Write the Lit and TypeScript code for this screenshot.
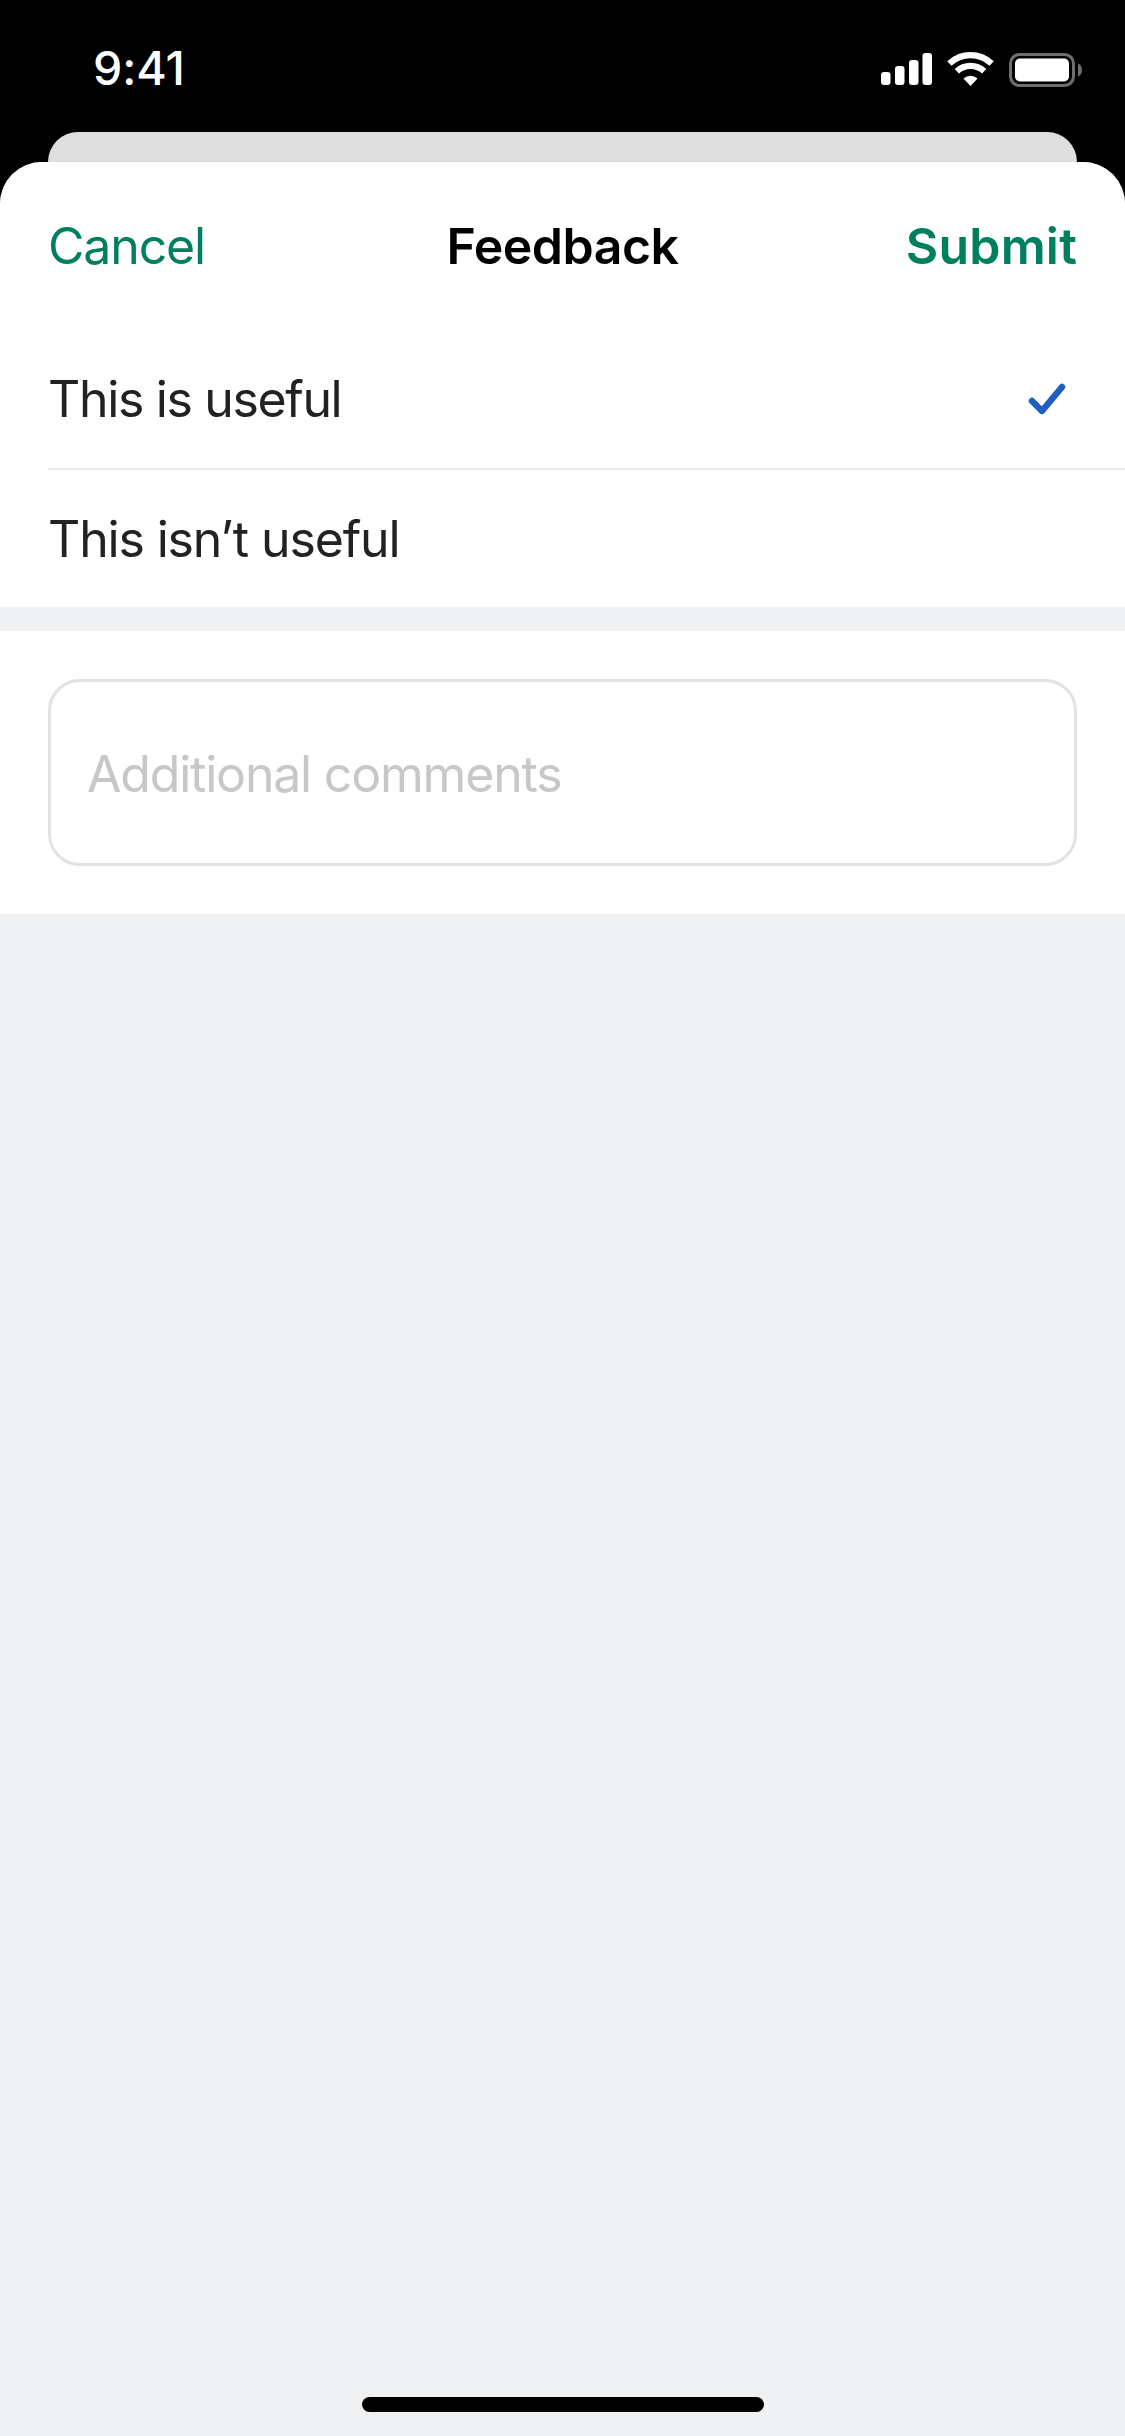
import { LitElement, html, css } from "lit";
import { customElement } from "lit/decorators.js";

@customElement("app-root")
export class AppRoot extends LitElement {
  static styles = css`
    :host {
      display: flex;
      flex-direction: column;
      width: 1125px;
      height: 2436px;
      background: #000;
      font-family: Inter, "Liberation Sans", sans-serif;
      overflow: hidden;
    }
    .status {
      height: 132px;
      box-sizing: border-box;
      padding: 44px 43px 0 93px;
      display: flex;
      justify-content: space-between;
      align-items: flex-start;
      flex: none;
    }
    .time {
      color: #fff;
      font-size: 46.5px;
      font-weight: 500;
      line-height: 48px;
      letter-spacing: -0.1px;
    }
    .icons {
      display: flex;
      align-items: flex-start;
      margin-top: 9px;
    }
    .signal { width: 51px; height: 32px; margin-right: 15px; }
    .wifi { width: 47px; height: 34px; margin-right: 15px; margin-top: -1px; }
    .battery { width: 73px; height: 34px; }
    .peek {
      height: 30px;
      flex: none;
      margin: 0 48px;
      background: #dedede;
      border-radius: 30px 30px 0 0;
    }
    .sheet {
      flex: 1;
      display: flex;
      flex-direction: column;
      background: #f0f1f3;
      border-radius: 42px 42px 0 0;
      overflow: hidden;
    }
    .nav {
      height: 168px;
      flex: none;
      background: #fff;
      box-sizing: border-box;
      padding: 0 48px;
      display: grid;
      grid-template-columns: 1fr auto 1fr;
      align-items: center;
      font-size: 50px;
      line-height: 60px;
    }
    .cancel { color: #007f5f; letter-spacing: -1.15px; }
    .title { color: #000; font-weight: 600; letter-spacing: -0.5px; }
    .submit { color: #007f5f; font-weight: 600; text-align: right; letter-spacing: 0.2px; }
    .list { background: #fff; flex: none; padding-left: 48px; }
    .row {
      height: 138px;
      display: flex;
      align-items: center;
      justify-content: space-between;
      font-size: 50px;
      color: #222;
      letter-spacing: -1.35px;
    }
    .row.first { border-bottom: 2px solid #e8e8ea; }
    .row.last { height: 137px; letter-spacing: -1.15px; }
    .check { width: 40px; height: 34px; margin-right: 58px; }
    .comments {
      margin-top: 24px;
      flex: none;
      background: #fff;
      box-sizing: border-box;
      height: 283px;
      padding: 48px;
    }
    .input {
      height: 187px;
      box-sizing: border-box;
      border: 3px solid #e0e2e5;
      border-radius: 32px;
      display: flex;
      align-items: center;
      padding: 2px 0 0 36px;
      font-size: 50px;
      color: #c7c7c7;
      letter-spacing: -1.2px;
    }
    .spacer {
      flex: 1;
      display: flex;
      align-items: flex-end;
      justify-content: center;
      padding-bottom: 24px;
    }
    .home {
      width: 402px;
      height: 15px;
      border-radius: 8px;
      background: #000;
    }
  `;

  render() {
    return html`
      <div class="status">
        <span class="time">9:41</span>
        <div class="icons">
          <svg class="signal" viewBox="0 0 51 32">
            <rect x="0" y="19" width="9.5" height="13" rx="3" fill="#fff"></rect>
            <rect x="14" y="13" width="9.5" height="19" rx="3" fill="#fff"></rect>
            <rect x="28" y="7" width="9.5" height="25" rx="3" fill="#fff"></rect>
            <rect x="41.5" y="0" width="9.5" height="32" rx="3" fill="#fff"></rect>
          </svg>
          <svg class="wifi" viewBox="0 0 45 33">
            <path d="M2 11.1 A30 30 0 0 1 43 11.1" fill="none" stroke="#fff" stroke-width="6"></path>
            <path d="M9.2 18.7 A19.5 19.5 0 0 1 35.8 18.7" fill="none" stroke="#fff" stroke-width="6"></path>
            <path d="M22.5 33 L15.7 25.7 A10 10 0 0 1 29.3 25.7 Z" fill="#fff"></path>
          </svg>
          <svg class="battery" viewBox="0 0 73 34">
            <rect x="1.5" y="1.5" width="63" height="31" rx="9" fill="none" stroke="#6e6e6e" stroke-width="3"></rect>
            <rect x="6" y="5.5" width="54" height="23" rx="5" fill="#fff"></rect>
            <path d="M69 10.5 C71.5 11.5 73 14 73 17 C73 20 71.5 22.5 69 23.5 Z" fill="#6e6e6e"></path>
          </svg>
        </div>
      </div>
      <div class="peek"></div>
      <div class="sheet">
        <div class="nav">
          <span class="cancel">Cancel</span>
          <span class="title">Feedback</span>
          <span class="submit">Submit</span>
        </div>
        <div class="list">
          <div class="row first">
            <span>This is useful</span>
            <svg class="check" viewBox="0 0 40 34">
              <path d="M5 19 L15 29 L35 5" fill="none" stroke="#1f5fbf" stroke-width="6.5" stroke-linecap="round" stroke-linejoin="round"></path>
            </svg>
          </div>
          <div class="row last"><span>This isn’t useful</span></div>
        </div>
        <div class="comments">
          <div class="input">Additional comments</div>
        </div>
        <div class="spacer"><div class="home"></div></div>
      </div>
    `;
  }
}
